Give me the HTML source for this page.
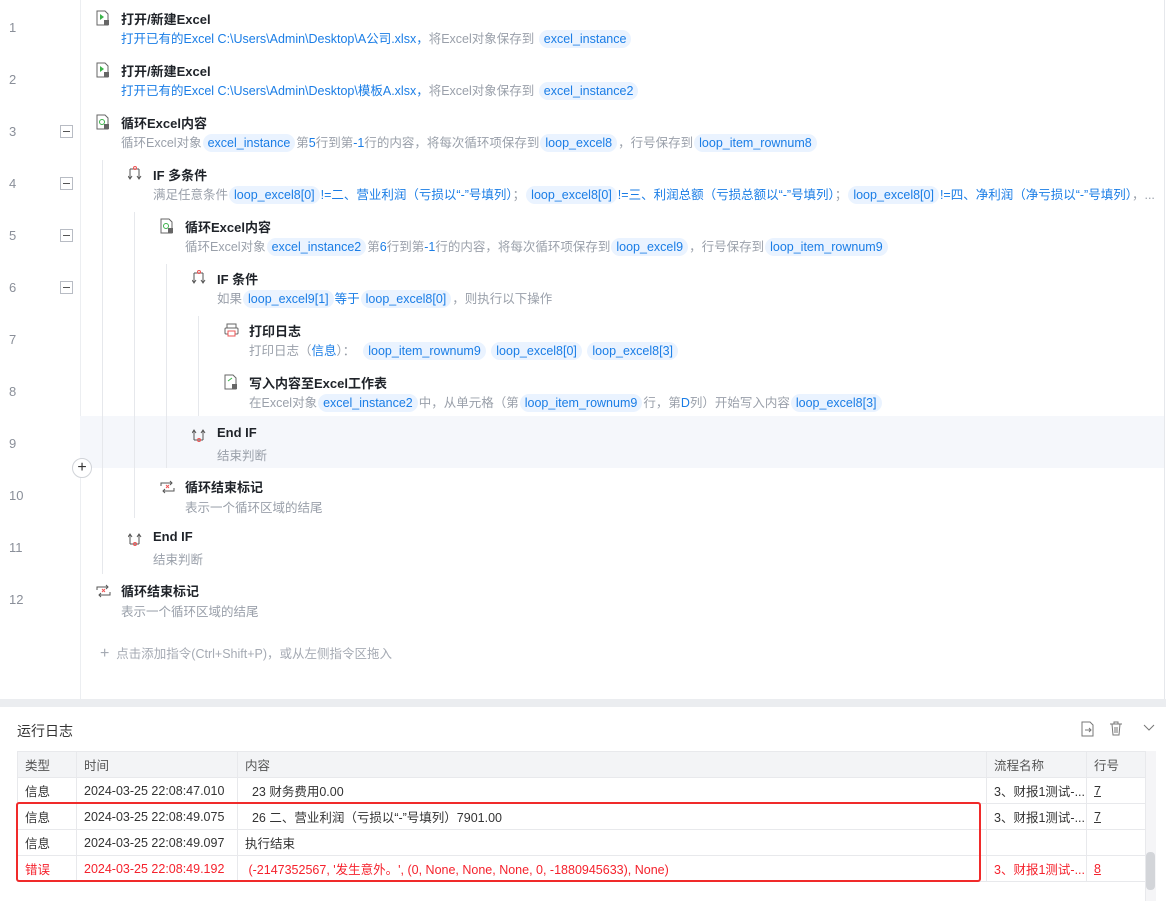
<!DOCTYPE html>
<html><head><meta charset="utf-8"><style>
*{margin:0;padding:0;box-sizing:border-box}
body{width:1166px;height:901px;overflow:hidden;background:#fff;font-family:"Liberation Sans","Noto Sans CJK SC",sans-serif;position:relative;color:#1f2329}
.a{position:absolute;white-space:nowrap}
.ln{position:absolute;left:9px;font-size:13px;color:#8a8f99}
.cb{position:absolute;left:60px;width:13px;height:13px;border:1px solid #b8bcc4;background:#fff}
.cb:after{content:"";position:absolute;left:2px;top:5px;width:7px;height:1px;background:#555}
.t{position:absolute;font-size:13px;font-weight:bold;color:#1f2329;white-space:nowrap}
.d{position:absolute;font-size:12.5px;color:#9aa0aa;white-space:nowrap}
.d.b{color:#1a7de6}
.p{display:inline-block;background:#eaf3ff;color:#1a7de6;border-radius:9px;padding:0 5px;line-height:18px;margin:0 1px}
.bl{color:#1a7de6}
.vl{position:absolute;width:1px;background:#e6e8ec}
.ic{position:absolute}
table{border-collapse:collapse;table-layout:fixed;font-size:12.5px;position:absolute;left:17px;top:751px;width:1128px}
td{border:1px solid #e8e9ec;height:26px;padding:0 7px;color:#333;white-space:nowrap;overflow:hidden}
tr.h td{background:#f3f4f6;color:#555}
tr.r td{color:#f5222d}
</style></head><body>
<div class="vl" style="left:80px;top:0;height:699px;background:#eceef1"></div>
<div class="vl" style="left:1164px;top:0;height:699px;background:#e6e8ec"></div>
<div class="a" style="left:80px;top:416px;width:1084px;height:52px;background:#f5f7fb"></div>
<div class="vl" style="left:102px;top:160px;height:414px"></div>
<div class="vl" style="left:134px;top:212px;height:306px"></div>
<div class="vl" style="left:166px;top:264px;height:204px"></div>
<div class="vl" style="left:198px;top:316px;height:100px"></div>
<div class="a" style="left:72px;top:458px;width:20px;height:20px;border:1px solid #d0d3d8;border-radius:50%;background:#fff;font-size:16px;line-height:17px;text-align:center;color:#333">+</div>

<div class="ln" style="top:20px">1</div><div class="ln" style="top:72px">2</div><div class="ln" style="top:124px">3</div><div class="ln" style="top:176px">4</div><div class="ln" style="top:228px">5</div><div class="ln" style="top:280px">6</div><div class="ln" style="top:332px">7</div><div class="ln" style="top:384px">8</div><div class="ln" style="top:436px">9</div><div class="ln" style="top:488px">10</div><div class="ln" style="top:540px">11</div><div class="ln" style="top:592px">12</div>
<div class="cb" style="top:125px"></div><div class="cb" style="top:177px"></div><div class="cb" style="top:229px"></div><div class="cb" style="top:281px"></div>

<svg class="ic" style="left:96px;top:10px" width="14" height="16"><path d="M1 1h8l3 3v11H1z" fill="none" stroke="#666"/><path d="M4 4l4 3-4 3z" fill="#3cb34a"/><rect x="8" y="10" width="5" height="5" fill="#666"/></svg>
<svg class="ic" style="left:96px;top:62px" width="14" height="16"><path d="M1 1h8l3 3v11H1z" fill="none" stroke="#666"/><path d="M4 4l4 3-4 3z" fill="#3cb34a"/><rect x="8" y="10" width="5" height="5" fill="#666"/></svg>
<svg class="ic" style="left:96px;top:114px" width="14" height="16"><path d="M1 1h8l3 3v11H1z" fill="none" stroke="#666"/><circle cx="6" cy="8" r="2.5" fill="none" stroke="#3cb34a"/><rect x="8" y="10" width="5" height="5" fill="#666"/></svg>
<svg class="ic" style="left:128px;top:166px" width="14" height="16"><path d="M2 3v9M0 10l2 3 2-3M11 3v9M9 10l2 3 2-3M2 3h9" fill="none" stroke="#555"/><circle cx="7" cy="2" r="1.5" fill="none" stroke="#e55"/></svg>
<svg class="ic" style="left:160px;top:218px" width="14" height="16"><path d="M1 1h8l3 3v11H1z" fill="none" stroke="#666"/><circle cx="6" cy="8" r="2.5" fill="none" stroke="#3cb34a"/><rect x="8" y="10" width="5" height="5" fill="#666"/></svg>
<svg class="ic" style="left:192px;top:270px" width="14" height="16"><path d="M2 3v9M0 10l2 3 2-3M11 3v9M9 10l2 3 2-3M2 3h9" fill="none" stroke="#555"/><circle cx="7" cy="2" r="1.5" fill="none" stroke="#e55"/></svg>
<svg class="ic" style="left:224px;top:323px" width="15" height="14"><rect x="3" y="1" width="9" height="4" fill="none" stroke="#666"/><rect x="1" y="5" width="13" height="6" rx="1" fill="none" stroke="#666"/><rect x="4" y="8" width="7" height="5" fill="#fff" stroke="#e55"/></svg>
<svg class="ic" style="left:224px;top:374px" width="14" height="16"><path d="M1 1h8l3 3v11H1z" fill="none" stroke="#666"/><path d="M4 7l4-3" stroke="#3cb34a"/><rect x="8" y="10" width="5" height="5" fill="#666"/></svg>
<svg class="ic" style="left:192px;top:427px" width="14" height="16"><path d="M2 13V4M0 6l2-3 2 3M11 13V4M9 6l2-3 2 3M2 13h9" fill="none" stroke="#555"/><circle cx="7" cy="13" r="1.5" fill="none" stroke="#e55"/></svg>
<svg class="ic" style="left:160px;top:480px" width="15" height="14"><path d="M1 6V3h11M10 1l2 2-2 2M14 8v3H3M5 9l-2 2 2 2" fill="none" stroke="#555"/><path d="M6 5l3 3M9 5l-3 3" stroke="#e55"/></svg>
<svg class="ic" style="left:128px;top:531px" width="14" height="16"><path d="M2 13V4M0 6l2-3 2 3M11 13V4M9 6l2-3 2 3M2 13h9" fill="none" stroke="#555"/><circle cx="7" cy="13" r="1.5" fill="none" stroke="#e55"/></svg>
<svg class="ic" style="left:96px;top:584px" width="15" height="14"><path d="M1 6V3h11M10 1l2 2-2 2M14 8v3H3M5 9l-2 2 2 2" fill="none" stroke="#555"/><path d="M6 5l3 3M9 5l-3 3" stroke="#e55"/></svg>

<div class="t" style="left:121px;top:9px">打开/新建Excel</div>
<div class="d b" style="left:121px;top:30px;line-height:18px">打开已有的Excel C:\Users\Admin\Desktop\A公司.xlsx，<span style="color:#9aa0aa">将Excel对象保存到</span> <span class="p">excel_instance</span></div>
<div class="t" style="left:121px;top:61px">打开/新建Excel</div>
<div class="d b" style="left:121px;top:82px;line-height:18px">打开已有的Excel C:\Users\Admin\Desktop\模板A.xlsx，<span style="color:#9aa0aa">将Excel对象保存到</span> <span class="p">excel_instance2</span></div>
<div class="t" style="left:121px;top:113px">循环Excel内容</div>
<div class="d" style="left:121px;top:134px;line-height:18px">循环Excel对象<span class="p">excel_instance</span>第<span class="bl">5</span>行到第<span class="bl">-1</span>行的内容，将每次循环项保存到<span class="p">loop_excel8</span>，行号保存到<span class="p">loop_item_rownum8</span></div>
<div class="t" style="left:153px;top:165px">IF 多条件</div>
<div class="d" style="left:153px;top:186px;line-height:18px">满足任意条件<span class="p">loop_excel8[0]</span><span class="bl">!=二、营业利润（亏损以“-”号填列）</span>；<span class="p">loop_excel8[0]</span><span class="bl">!=三、利润总额（亏损总额以“-”号填列）</span>；<span class="p">loop_excel8[0]</span><span class="bl">!=四、净利润（净亏损以“-”号填列）</span>，...</div>
<div class="t" style="left:185px;top:217px">循环Excel内容</div>
<div class="d" style="left:185px;top:238px;line-height:18px">循环Excel对象<span class="p">excel_instance2</span>第<span class="bl">6</span>行到第<span class="bl">-1</span>行的内容，将每次循环项保存到<span class="p">loop_excel9</span>，行号保存到<span class="p">loop_item_rownum9</span></div>
<div class="t" style="left:217px;top:269px">IF 条件</div>
<div class="d" style="left:217px;top:290px;line-height:18px">如果<span class="p">loop_excel9[1]</span><span class="bl">等于</span><span class="p">loop_excel8[0]</span>，则执行以下操作</div>
<div class="t" style="left:249px;top:321px">打印日志</div>
<div class="d" style="left:249px;top:342px;line-height:18px">打印日志（<span class="bl">信息</span>）：&nbsp;&nbsp;<span class="p">loop_item_rownum9</span> <span class="p">loop_excel8[0]</span> <span class="p">loop_excel8[3]</span></div>
<div class="t" style="left:249px;top:373px">写入内容至Excel工作表</div>
<div class="d" style="left:249px;top:394px;line-height:18px">在Excel对象<span class="p">excel_instance2</span>中，从单元格（第<span class="p">loop_item_rownum9</span>行，第<span class="bl">D</span>列）开始写入内容<span class="p">loop_excel8[3]</span></div>
<div class="t" style="left:217px;top:425px">End IF</div>
<div class="d" style="left:217px;top:445px">结束判断</div>
<div class="t" style="left:185px;top:477px">循环结束标记</div>
<div class="d" style="left:185px;top:497px">表示一个循环区域的结尾</div>
<div class="t" style="left:153px;top:529px">End IF</div>
<div class="d" style="left:153px;top:549px">结束判断</div>
<div class="t" style="left:121px;top:581px">循环结束标记</div>
<div class="d" style="left:121px;top:601px">表示一个循环区域的结尾</div>
<div class="d" style="left:100px;top:643px;color:#a5aab3"><span style="font-size:16px">+</span>&nbsp;&nbsp;点击添加指令(Ctrl+Shift+P)，或从左侧指令区拖入</div>

<div class="a" style="left:0;top:699px;width:1166px;height:8px;background:#ebedf0"></div>
<div class="a" style="left:17px;top:721px;font-size:14px;color:#333">运行日志</div>
<svg class="a" style="left:1081px;top:721px" width="14" height="16"><path d="M1 1h8l3 3v11H1z" fill="none" stroke="#777"/><path d="M4 9h6M8 7l2 2-2 2" fill="none" stroke="#777"/></svg>
<svg class="a" style="left:1109px;top:721px" width="14" height="15"><path d="M1 3h12M5 3V1h4v2M3 3l1 11h6l1-11M6 6v6M8 6v6" fill="none" stroke="#777"/></svg>
<svg class="a" style="left:1143px;top:724px" width="12" height="8"><path d="M1 1l5 5 5-5" fill="none" stroke="#777"/></svg>
<table>
<colgroup><col style="width:59px"><col style="width:161px"><col style="width:749px"><col style="width:100px"><col style="width:59px"></colgroup>
<tr class="h"><td>类型</td><td>时间</td><td>内容</td><td>流程名称</td><td>行号</td></tr>
<tr><td>信息</td><td>2024-03-25 22:08:47.010</td><td>&nbsp;&nbsp;23 财务费用0.00</td><td>3、财报1测试-...</td><td><u>7</u></td></tr>
<tr><td>信息</td><td>2024-03-25 22:08:49.075</td><td>&nbsp;&nbsp;26 二、营业利润（亏损以“-”号填列）7901.00</td><td>3、财报1测试-...</td><td><u>7</u></td></tr>
<tr><td>信息</td><td>2024-03-25 22:08:49.097</td><td>执行结束</td><td></td><td></td></tr>
<tr class="r"><td>错误</td><td>2024-03-25 22:08:49.192</td><td>&nbsp;(-2147352567, '发生意外。', (0, None, None, None, 0, -1880945633), None)</td><td>3、财报1测试-...</td><td><u>8</u></td></tr>
</table>
<div class="a" style="left:1145px;top:751px;width:11px;height:150px;background:#f5f5f7;border-left:1px solid #e8e9ec"></div>
<div class="a" style="left:1146px;top:852px;width:9px;height:38px;background:#d3d5d9;border-radius:4px"></div>
<div class="a" style="left:16px;top:802px;width:965px;height:80px;border:2px solid #f02a2a;border-radius:3px"></div>
</body></html>
